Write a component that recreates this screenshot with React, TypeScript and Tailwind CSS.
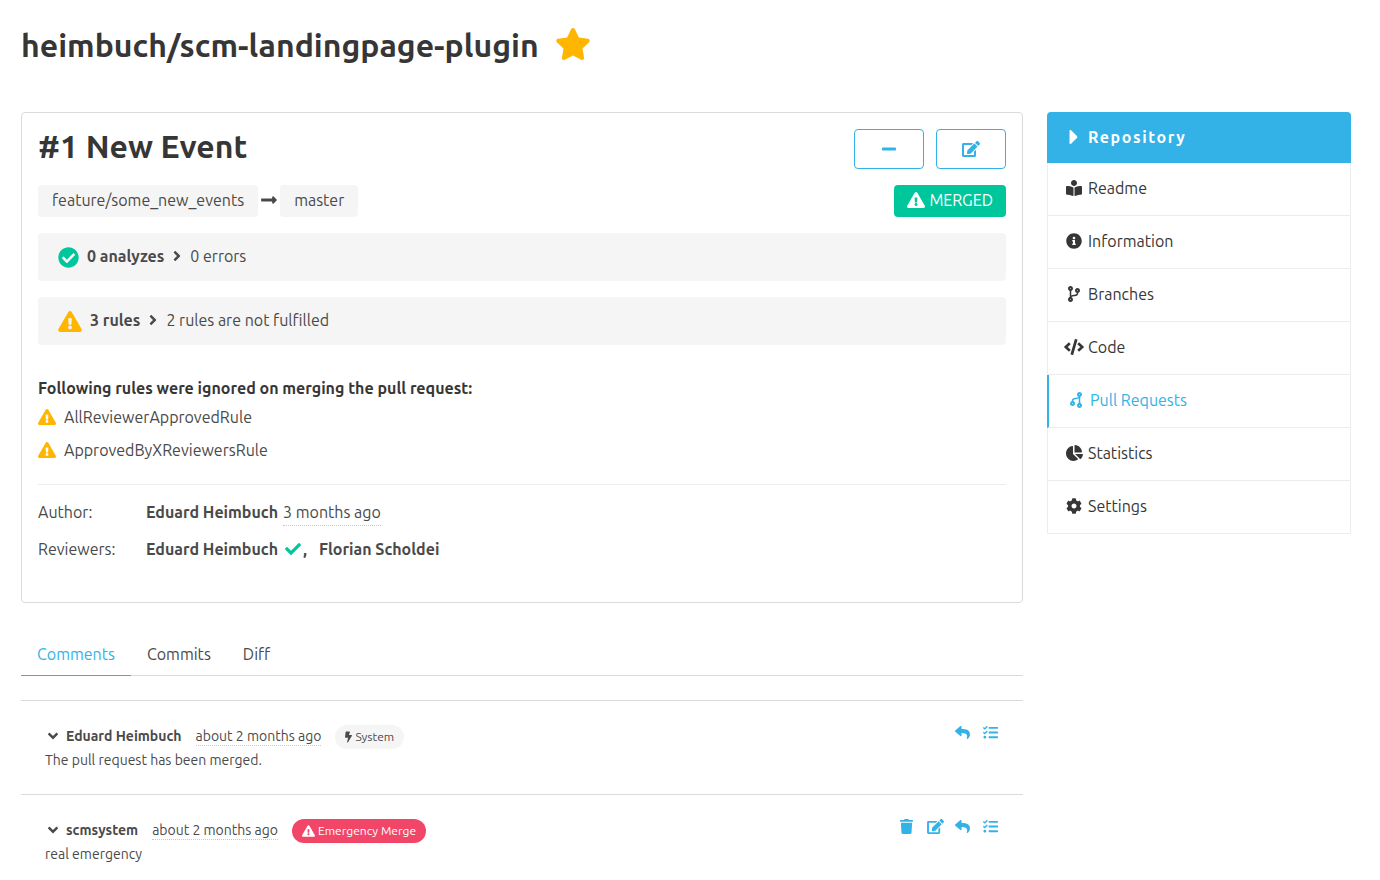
import type { ReactNode } from "react";
import type { IconType } from "react-icons";
import {
  FaAngleDown,
  FaAngleRight,
  FaBolt,
  FaBookReader,
  FaCaretRight,
  FaChartPie,
  FaCheck,
  FaCheckCircle,
  FaCode,
  FaCodeBranch,
  FaCog,
  FaEdit,
  FaExclamationTriangle,
  FaInfoCircle,
  FaLongArrowAltRight,
  FaMinus,
  FaReply,
  FaStar,
  FaTasks,
  FaTrash,
} from "react-icons/fa";

type NavItem = { label: string; icon: IconType; active?: boolean; iconClass?: string };

const navItems: NavItem[] = [
  { label: "Readme", icon: FaBookReader },
  { label: "Information", icon: FaInfoCircle },
  { label: "Branches", icon: FaCodeBranch },
  { label: "Code", icon: FaCode, iconClass: "h-4 w-5" },
  { label: "Pull Requests", icon: FaCodeBranch, active: true, iconClass: "h-4 w-4 rotate-180" },
  { label: "Statistics", icon: FaChartPie, iconClass: "h-4 w-[17px]" },
  { label: "Settings", icon: FaCog },
];

function Sidebar() {
  return (
    <nav aria-label="Repository" className="w-[304px] shrink-0 text-[#363636]">
      <div className="flex h-[51px] items-center gap-1 rounded-t bg-[#33b2e8] px-[17px] pb-0.5 font-bold tracking-widest text-white">
        <span className="flex w-5 justify-center">
          <FaCaretRight className="h-6 w-5" />
        </span>
        Repository
      </div>
      <ul>
        {navItems.map(({ label, icon: Icon, active, iconClass }) => (
          <li key={label}>
            <a
              href="#"
              className={
                active
                  ? "flex h-[53px] items-center gap-1 border-r border-b border-l-2 border-[#ededed] border-l-[#33b2e8] pr-4 pb-[3px] pl-[17px] text-[#33b2e8]"
                  : "flex h-[53px] items-center gap-1 border-x border-b border-[#ededed] px-4 pb-[3px]"
              }
            >
              <span className="flex w-5 justify-center">
                <Icon className={iconClass ?? "h-4 w-4"} />
              </span>
              {label}
            </a>
          </li>
        ))}
      </ul>
    </nav>
  );
}

function StatusBar({ icon, title, detail }: { icon: ReactNode; title: string; detail: string }) {
  return (
    <div className="mt-4 flex h-12 items-center rounded bg-[#f5f5f5] px-5 pb-0.5">
      {icon}
      <strong className="font-bold">{title}</strong>
      <FaAngleRight className="mx-[5px] h-4 w-4" />
      <span>{detail}</span>
    </div>
  );
}

function IgnoredRule({ name }: { name: string }) {
  return (
    <li className="flex items-center gap-2">
      <FaExclamationTriangle className="h-4 w-[18px] text-[#ffb600]" />
      {name}
    </li>
  );
}

type Action = { label: string; icon: IconType };

function Comment({
  author,
  badge,
  text,
  actions,
}: {
  author: string;
  badge: ReactNode;
  text: string;
  actions: Action[];
}) {
  return (
    <article className="flex items-start justify-between border-t border-[#dbdbdb] px-6 pt-6 pb-[23px] text-sm">
      <div>
        <div className="flex h-6 items-center">
          <div className="flex items-center pb-0.5">
            <button type="button" aria-label="Collapse comment" className="flex w-4 justify-center">
              <FaAngleDown className="h-4 w-4" />
            </button>
            <strong className="ml-[5px] font-bold">{author}</strong>
            <time className="mx-[14px] border-b border-dotted border-[#c8c8c8] leading-[18px]">
              about 2 months ago
            </time>
          </div>
          {badge}
        </div>
        <p className="leading-[22px]">{text}</p>
      </div>
      <div className="flex gap-3 text-[#33b2e8]">
        {actions.map(({ label, icon: Icon }) => (
          <button key={label} type="button" aria-label={label} className="flex h-[15px] w-4">
            <Icon className={label === "Edit" ? "h-[15px] w-[17px] shrink-0" : "h-[15px] w-[15px]"} />
          </button>
        ))}
      </div>
    </article>
  );
}

const reply: Action = { label: "Reply", icon: FaReply };
const task: Action = { label: "Make task", icon: FaTasks };

export default function App() {
  return (
    <div className="min-h-screen bg-white pt-6 pr-[29px] pl-[21px] font-['Ubuntu','Noto_Sans',sans-serif] text-base leading-6 text-[#4a4a4a]">
      <header className="flex h-11 items-center gap-4 pb-0.5">
        <h1 className="text-[32px] leading-9 font-bold text-[#363636]">heimbuch/scm-landingpage-plugin</h1>
        <button type="button" aria-label="Remove favorite" className="pb-0.5 text-[#ffb600]">
          <FaStar className="h-8 w-9" />
        </button>
      </header>

      <div className="mt-11 flex items-start gap-6">
        <main className="min-w-0 flex-1">
          <section className="rounded border border-[#dbdbdb] px-4 pt-4 pb-[41px]">
            <div className="flex items-start justify-between">
              <h2 className="text-[32px] leading-[34px] font-bold text-[#363636]">#1 New Event</h2>
              <div className="flex gap-3 text-[#33b2e8]">
                <button
                  type="button"
                  aria-label="Reject"
                  className="flex h-10 w-[70px] items-center justify-center rounded border border-[#33b2e8]"
                >
                  <FaMinus className="h-4 w-[14px]" />
                </button>
                <button
                  type="button"
                  aria-label="Edit pull request"
                  className="flex h-10 w-[70px] items-center justify-center rounded border border-[#33b2e8]"
                >
                  <FaEdit className="h-4 w-[18px]" />
                </button>
              </div>
            </div>

            <div className="mt-4 flex h-8 items-center">
              <span className="rounded bg-[#f5f5f5] px-[14px] pt-[3px] pb-[5px]">feature/some_new_events</span>
              <FaLongArrowAltRight className="mx-[3px] mb-0.5 h-[18px] w-4" />
              <span className="rounded bg-[#f5f5f5] px-[14px] pt-[3px] pb-[5px]">master</span>
              <span className="ml-auto flex items-center gap-1 rounded bg-[#00c79b] px-[13px] pt-[3px] pb-[5px] text-white">
                <FaExclamationTriangle className="h-4 w-[18px]" />
                MERGED
              </span>
            </div>

            <StatusBar
              icon={<FaCheckCircle className="mt-0.5 mr-2 h-[21px] w-[21px] text-[#00c79b]" />}
              title="0 analyzes"
              detail="0 errors"
            />
            <StatusBar
              icon={<FaExclamationTriangle className="mt-0.5 mr-2 h-[21px] w-6 text-[#ffb600]" />}
              title="3 rules"
              detail="2 rules are not fulfilled"
            />

            <h3 className="mt-[31px] font-bold text-[#363636]">
              Following rules were ignored on merging the pull request:
            </h3>
            <ul className="mt-[5px] flex flex-col gap-[9px]">
              <IgnoredRule name="AllReviewerApprovedRule" />
              <IgnoredRule name="ApprovedByXReviewersRule" />
            </ul>

            <dl className="mt-[22px] grid grid-cols-[108px_1fr] gap-y-[13px] border-t border-[#ededed] pt-[15px]">
              <dt>Author:</dt>
              <dd className="flex gap-[5px]">
                <strong className="font-bold">Eduard Heimbuch</strong>
                <time className="-mb-[2px] border-b border-dotted border-[#c8c8c8]">3 months ago</time>
              </dd>
              <dt>Reviewers:</dt>
              <dd className="flex items-center font-bold">
                Eduard Heimbuch
                <FaCheck className="mr-0.5 ml-[7px] h-4 w-4 text-[#00c79b]" />
                <span className="mr-3">,</span>
                Florian Scholdei
              </dd>
            </dl>
          </section>

          <nav aria-label="Pull request" className="mt-8 flex border-b border-[#dbdbdb]">
            <a href="#" className="-mb-px border-b border-[#33b2e8] px-4 pt-[7px] pb-[9px] text-[#33b2e8]">
              Comments
            </a>
            <a href="#" className="px-4 pt-[7px] pb-[9px]">
              Commits
            </a>
            <a href="#" className="px-4 pt-[7px] pb-[9px]">
              Diff
            </a>
          </nav>

          <section className="mt-6">
            <Comment
              author="Eduard Heimbuch"
              text="The pull request has been merged."
              actions={[reply, task]}
              badge={
                <span className="flex h-6 items-center gap-[3px] rounded-full bg-[#f5f5f5] px-[10px] text-xs">
                  <FaBolt className="h-3 w-[7px]" />
                  System
                </span>
              }
            />
            <Comment
              author="scmsystem"
              text="real emergency"
              actions={[{ label: "Delete", icon: FaTrash }, { label: "Edit", icon: FaEdit }, reply, task]}
              badge={
                <span className="flex h-6 items-center gap-[3px] rounded-full bg-[#f14668] px-[10px] text-xs text-white">
                  <FaExclamationTriangle className="h-3 w-[13px]" />
                  Emergency Merge
                </span>
              }
            />
          </section>
        </main>
        <Sidebar />
      </div>
    </div>
  );
}
